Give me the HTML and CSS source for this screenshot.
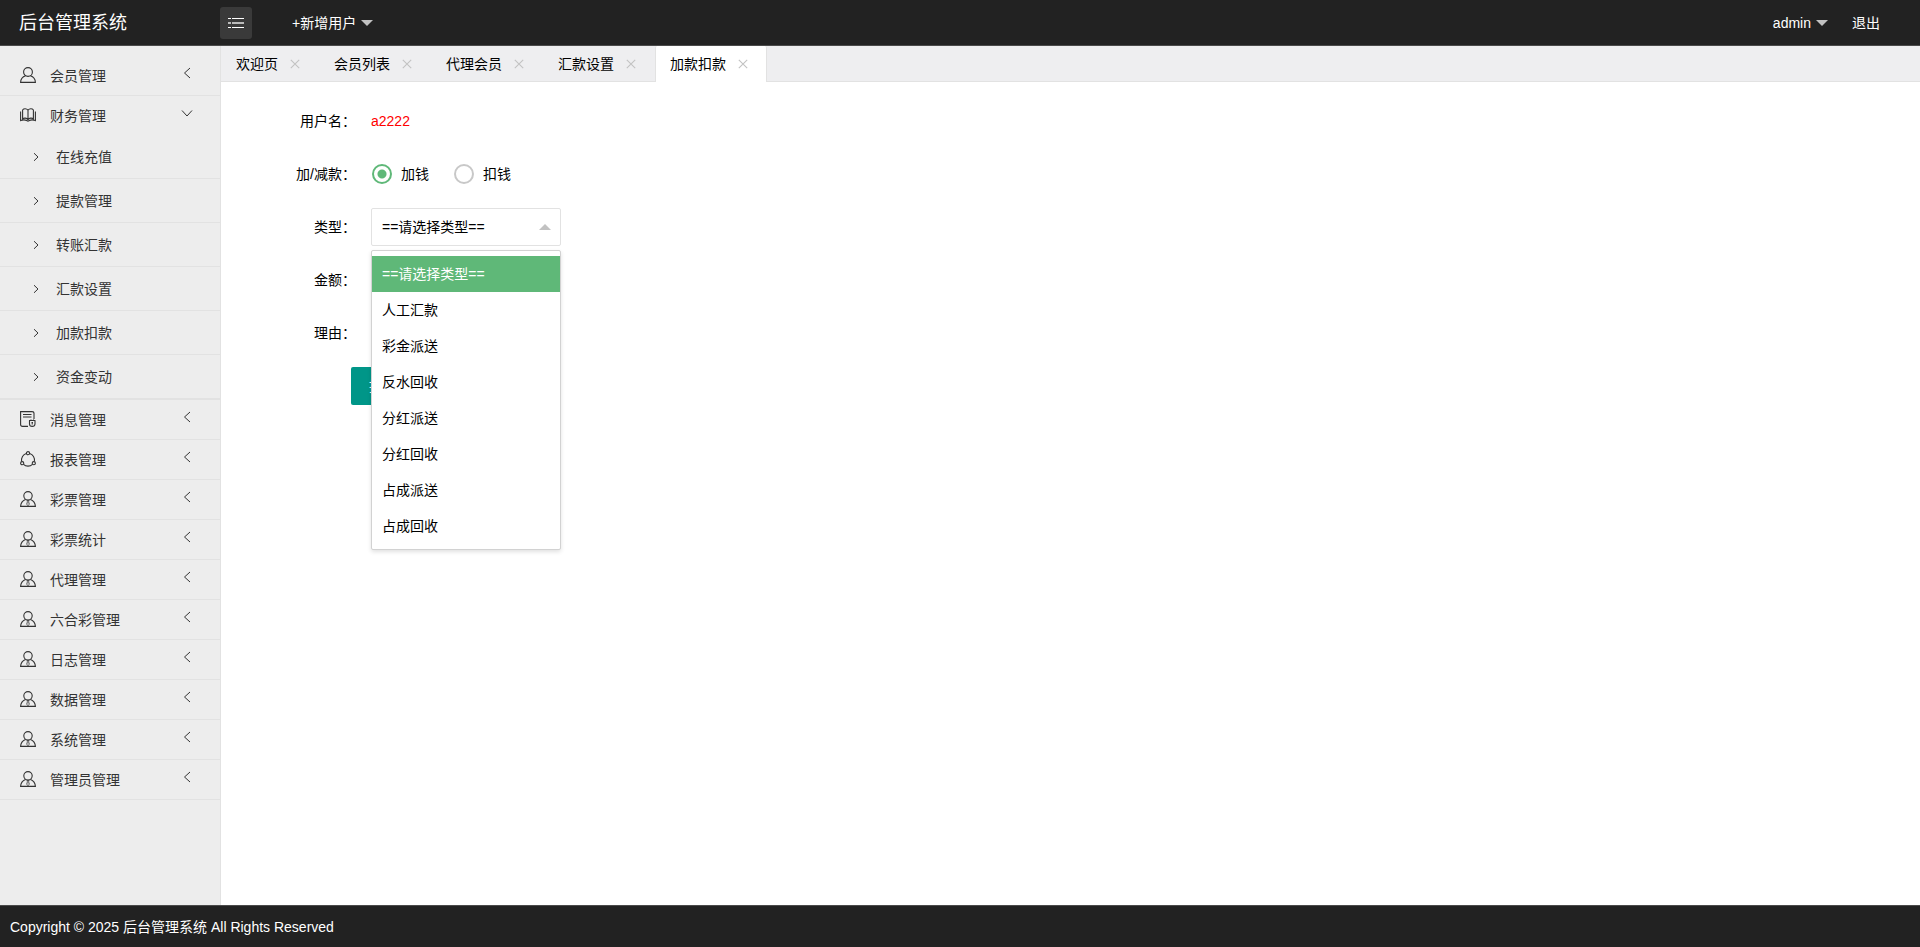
FILE: index.html
```html
<!DOCTYPE html>
<html lang="zh-CN">
<head>
<meta charset="utf-8">
<title>后台管理系统</title>
<link rel="stylesheet" href="styles.css">
</head>
<body>
<svg class="sprite" aria-hidden="true">
  <symbol id="i-user" viewBox="0 0 16 16"><circle cx="8" cy="5" r="4.4"/><path d="M5.6 8.8C2.6 9.8.7 11.8.6 15.4H15.4C15.3 11.8 13.4 9.8 10.4 8.8"/></symbol>
  <symbol id="i-agent" viewBox="0 0 16 16"><circle cx="8" cy="4.8" r="4.2"/><path d="M5.5 8.5C2.6 9.7.8 11.8.6 15.4H15.4C15.2 11.8 13.4 9.7 10.5 8.5"/><path stroke-width=".8" d="M7 9.4H9L8.600 10.800 9.300 13.400 8 14.600 6.700 13.400 7.400 10.800Z"/></symbol>
  <symbol id="i-book" viewBox="0 0 16 16"><path d="M8 3.200C6.500 1.400 3.800 1.400 2.600 3V11.800C4 10.800 6.800 10.800 8 12.600 9.200 10.800 12 10.800 13.400 11.800V3C12.200 1.400 9.500 1.400 8 3.200V12.600M.6 4.500V13.600C2.500 12.800 4.800 12.600 6.500 13.400L8 14.200 9.500 13.400C11.200 12.600 13.500 12.800 15.400 13.600V4.500"/></symbol>
  <symbol id="i-note" viewBox="0 0 16 16"><path d="M8 15.4H2.500Q.6 15.4.6 13.500V.6H12Q14 .6 14 2.500V8M3 3.500H11.500M3 6H11.500M9 9.500H15.400M9.500 9.500V13Q9.500 15.400 12.200 15.400T15 13V9.500M11 8.500V9.500M13.500 8.500V9.500M11.500 11.500H13M12.200 11.500V13.500"/></symbol>
  <symbol id="i-share" viewBox="0 0 16 16"><circle cx="8" cy="2.200" r="1.600"/><circle cx="2.200" cy="12.200" r="1.600"/><circle cx="13.800" cy="12.200" r="1.600"/><path d="M6.300 2.500C3 3.500 1 7 1.600 10.500M9.700 2.500C13 3.500 15 7 14.400 10.500M3.500 13.300C6 15.700 10 15.700 12.500 13.300"/></symbol>
  <symbol id="i-left" viewBox="0 0 12 12"><path d="M9 1 3.500 6 9 11"/></symbol>
  <symbol id="i-down" viewBox="0 0 12 12"><path d="M1 3.500 6 9 11 3.500"/></symbol>
  <symbol id="i-right" viewBox="0 0 12 12"><path d="M4 2.200 8 6 4 9.800"/></symbol>
  <symbol id="i-close" viewBox="0 0 10 10"><path d="M.8.8 9.200 9.200M9.200.8.8 9.200"/></symbol>
</svg>

<header class="header">
  <a class="logo" href="#">后台管理系统</a>
  <button class="toggle" type="button" aria-label="展开/收起菜单">
    <svg viewBox="0 0 16 12"><path d="M4 1.500H16M4 10.500H16M0 1.500H3M0 10.500H3"/><path class="dim" d="M4 6H16M0 6H3"/></svg>
  </button>
  <nav class="top-nav"><a class="drop" href="#">+新增用户</a></nav>
  <nav class="top-nav user-nav"><a class="drop" href="#">admin</a><a href="#">退出</a></nav>
</header>

<div class="body">
  <nav class="sidebar">
    <ul class="menu">
      <li><a href="#"><svg class="icon"><use href="#i-user"/></svg><span>会员管理</span><svg class="arrow"><use href="#i-left"/></svg></a></li>
      <li><a href="#"><svg class="icon"><use href="#i-book"/></svg><span>财务管理</span><svg class="arrow"><use href="#i-down"/></svg></a>
        <ul class="submenu">
          <li><a href="#"><svg class="mark"><use href="#i-right"/></svg>在线充值</a></li>
          <li><a href="#"><svg class="mark"><use href="#i-right"/></svg>提款管理</a></li>
          <li><a href="#"><svg class="mark"><use href="#i-right"/></svg>转账汇款</a></li>
          <li><a href="#"><svg class="mark"><use href="#i-right"/></svg>汇款设置</a></li>
          <li><a href="#"><svg class="mark"><use href="#i-right"/></svg>加款扣款</a></li>
          <li><a href="#"><svg class="mark"><use href="#i-right"/></svg>资金变动</a></li>
        </ul>
      </li>
      <li><a href="#"><svg class="icon"><use href="#i-note"/></svg><span>消息管理</span><svg class="arrow"><use href="#i-left"/></svg></a></li>
      <li><a href="#"><svg class="icon"><use href="#i-share"/></svg><span>报表管理</span><svg class="arrow"><use href="#i-left"/></svg></a></li>
      <li><a href="#"><svg class="icon"><use href="#i-agent"/></svg><span>彩票管理</span><svg class="arrow"><use href="#i-left"/></svg></a></li>
      <li><a href="#"><svg class="icon"><use href="#i-agent"/></svg><span>彩票统计</span><svg class="arrow"><use href="#i-left"/></svg></a></li>
      <li><a href="#"><svg class="icon"><use href="#i-agent"/></svg><span>代理管理</span><svg class="arrow"><use href="#i-left"/></svg></a></li>
      <li><a href="#"><svg class="icon"><use href="#i-agent"/></svg><span>六合彩管理</span><svg class="arrow"><use href="#i-left"/></svg></a></li>
      <li><a href="#"><svg class="icon"><use href="#i-agent"/></svg><span>日志管理</span><svg class="arrow"><use href="#i-left"/></svg></a></li>
      <li><a href="#"><svg class="icon"><use href="#i-agent"/></svg><span>数据管理</span><svg class="arrow"><use href="#i-left"/></svg></a></li>
      <li><a href="#"><svg class="icon"><use href="#i-agent"/></svg><span>系统管理</span><svg class="arrow"><use href="#i-left"/></svg></a></li>
      <li><a href="#"><svg class="icon"><use href="#i-agent"/></svg><span>管理员管理</span><svg class="arrow"><use href="#i-left"/></svg></a></li>
    </ul>
  </nav>

  <main class="content">
    <ul class="tabs">
      <li><a href="#">欢迎页</a><button type="button" aria-label="关闭"><svg><use href="#i-close"/></svg></button></li>
      <li><a href="#">会员列表</a><button type="button" aria-label="关闭"><svg><use href="#i-close"/></svg></button></li>
      <li><a href="#">代理会员</a><button type="button" aria-label="关闭"><svg><use href="#i-close"/></svg></button></li>
      <li><a href="#">汇款设置</a><button type="button" aria-label="关闭"><svg><use href="#i-close"/></svg></button></li>
      <li class="active"><a href="#">加款扣款</a><button type="button" aria-label="关闭"><svg><use href="#i-close"/></svg></button></li>
    </ul>
    <form class="form">
      <div class="row"><span class="label">用户名：</span><span class="username">a2222</span></div>
      <div class="row"><span class="label">加/减款：</span>
        <div class="radios">
          <label><input type="radio" name="op" checked><span>加钱</span></label>
          <label><input type="radio" name="op"><span>扣钱</span></label>
        </div>
      </div>
      <div class="row"><label class="label" for="type">类型：</label>
        <div class="select-box">
          <select id="type"><option>==请选择类型==</option></select>
          <ul class="options" role="listbox">
            <li class="selected" role="option">==请选择类型==</li>
            <li role="option">人工汇款</li>
            <li role="option">彩金派送</li>
            <li role="option">反水回收</li>
            <li role="option">分红派送</li>
            <li role="option">分红回收</li>
            <li role="option">占成派送</li>
            <li role="option">占成回收</li>
          </ul>
        </div>
      </div>
      <div class="row"><label class="label" for="amount">金额：</label><input class="field" id="amount" type="text"></div>
      <div class="row"><label class="label" for="reason">理由：</label><input class="field" id="reason" type="text"></div>
      <div class="row actions"><button class="submit" type="submit">提交</button></div>
    </form>
  </main>
</div>

<footer class="footer">Copyright © 2025 后台管理系统 All Rights Reserved</footer>
</body>
</html>
```
FILE: styles.css
```css
* { box-sizing: border-box; margin: 0; padding: 0; }

body {
  display: flex;
  flex-direction: column;
  min-height: 100vh;
  background: #fff;
  color: #000;
  font: 14px/20px "Liberation Sans", "Noto Sans CJK SC", sans-serif;
}

a { color: inherit; text-decoration: none; }
ul { list-style: none; }
button, input, select { font: inherit; color: inherit; }
svg { fill: none; stroke: currentColor; stroke-width: 1.1; }
.sprite { position: absolute; width: 0; height: 0; }

.header {
  display: flex;
  align-items: center;
  height: 46px;
  padding: 0 20px 0 19px;
  border-bottom: 1px solid #4a4a4a;
  background: #222;
  color: #fff;
}
.logo { width: 201px; font-size: 18px; }
.toggle {
  display: grid;
  place-items: center;
  width: 32px;
  height: 32px;
  border: 0;
  border-radius: 3px;
  background: #3a3a3a;
}
.toggle svg { width: 16px; height: 12px; stroke: #fff; stroke-width: 1; }
.toggle .dim { stroke: #bbb; stroke-width: 2; }
.top-nav { display: flex; margin-left: 20px; }
.top-nav a { display: flex; align-items: center; padding: 0 20px; }
.user-nav { margin-left: auto; }
.user-nav a + a { padding-left: 4px; }
.drop::after {
  content: "";
  margin-left: 5px;
  border: 6px solid transparent;
  border-top-color: #c2c2c2;
  border-bottom: 0;
}

.body { display: flex; flex: 1; }

.sidebar {
  flex: 0 0 221px;
  padding-top: 10px;
  border-right: 1px solid #e2e2e2;
  background: #ededed;
  color: #333;
}
.menu > li { border-bottom: 1px solid #e2e2e2; }
.menu > li > a { display: flex; align-items: center; height: 39px; padding: 0 27px 0 20px; }
.icon { width: 16px; height: 16px; margin: 0 14px 1px 0; }
.arrow { width: 12px; height: 12px; margin: 0 0 5px auto; stroke-width: 1; }
.submenu a {
  display: flex;
  align-items: center;
  height: 44px;
  padding-left: 30px;
  border-bottom: 1px solid #e2e2e2;
}
.mark { width: 12px; height: 12px; margin-right: 14px; stroke-width: 1; }

.content { flex: 1; min-width: 0; }
.tabs {
  display: flex;
  height: 36px;
  border-bottom: 1px solid #e2e2e2;
  background: #eeeef0;
}
.tabs li { display: flex; align-items: center; height: 36px; padding: 0 15px; }
.tabs .active {
  padding: 0 14px;
  border: solid #e2e2e2;
  border-width: 0 1px;
  border-radius: 2px 2px 0 0;
  background: #fff;
}
.tabs button {
  display: grid;
  place-items: center;
  width: 18px;
  height: 18px;
  margin-left: 8px;
  border: 0;
  background: none;
  color: #c2c2c2;
}
.tabs svg { width: 10px; height: 10px; }

.form { display: grid; gap: 15px; padding: 20px; }
.row { display: flex; align-items: center; height: 38px; }
.label { width: 130px; padding-right: 15px; text-align: right; }
.username { color: #f00; }
.radios { display: flex; }
.radios label { display: flex; align-items: center; width: 82px; }
.radios input {
  appearance: none;
  width: 20px;
  height: 20px;
  margin: 0 9px 0 1px;
  border: 2px solid #c8c8c8;
  border-radius: 50%;
}
.radios input:checked { border-color: #5fb878; background: radial-gradient(circle, #5fb878 4px, transparent 5px); }
.select-box { position: relative; width: 190px; }
.select-box::after {
  content: "";
  position: absolute;
  top: 16px;
  right: 10px;
  border: 6px solid transparent;
  border-bottom-color: #c2c2c2;
  border-top: 0;
}
.select-box select, .field {
  appearance: none;
  display: block;
  width: 190px;
  height: 38px;
  padding: 0 10px;
  border: 1px solid #e2e2e2;
  border-radius: 2px;
  background: #fff;
}
.options {
  position: absolute;
  z-index: 1;
  top: 42px;
  left: 0;
  width: 100%;
  padding: 5px 0;
  border: 1px solid #d2d2d2;
  border-radius: 2px;
  background: #fff;
  box-shadow: 0 2px 4px rgba(0, 0, 0, .12);
}
.options li { padding: 0 10px; line-height: 36px; }
.options .selected { background: #5fb878; color: #fff; }
.actions { padding-left: 110px; }
.submit { height: 38px; padding: 0 18px; border: 0; border-radius: 2px; background: #009688; color: #fff; }

.footer {
  height: 42px;
  padding: 0 10px;
  border-top: 1px solid #4a4a4a;
  background: #222;
  color: #fff;
  line-height: 43px;
}
```
